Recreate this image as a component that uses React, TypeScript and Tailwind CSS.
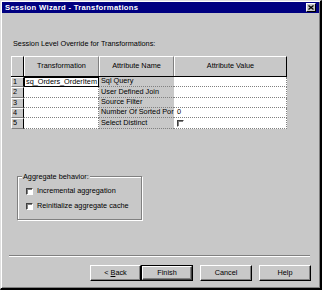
const rows = [
  { n: "1", t: "sq_Orders_OrderItem", a: "Sql Query", v: "", h: "h-[10px]" },
  { n: "2", t: "", a: "User Defined Join", v: "", h: "h-[11px]" },
  { n: "3", t: "", a: "Source Filter", v: "", h: "h-[10px]" },
  { n: "4", t: "", a: "Number Of Sorted Por", v: "0", h: "h-[10px]" },
  { n: "5", t: "", a: "Select Distinct", v: "check", h: "h-[11px]" },
];

function SunkenBox() {
  return (
    <span className="block w-[7px] h-[7px] bg-white border-t border-l border-t-[#404040] border-l-[#404040] border-b border-r border-b-white border-r-white shadow-[inset_1px_1px_#808080]" />
  );
}

function WinButton({ children, isDefault }: { children: React.ReactNode; isDefault?: boolean }) {
  if (isDefault) {
    return (
      <div className="w-[52px] h-[16px] border border-black">
        <div className="w-full h-full flex items-center justify-center border-t border-l border-t-white border-l-white border-b border-r border-b-[#404040] border-r-[#404040] shadow-[inset_-1px_-1px_#808080]">
          {children}
        </div>
      </div>
    );
  }
  return (
    <div className="w-[52px] h-[16px] flex items-center justify-center border-t border-l border-t-white border-l-white border-b border-r border-b-black border-r-black shadow-[inset_-1px_-1px_#808080]">
      {children}
    </div>
  );
}

export default function App() {
  return (
    <div className="w-[322px] h-[290px] bg-[#c8c8c8] border-t border-l border-t-[#dfdfdf] border-l-[#dfdfdf] border-r-2 border-b-2 border-r-black border-b-black p-px shadow-[inset_1px_1px_#fff,inset_-1px_-1px_#808080] font-['Liberation_Sans',Arial,sans-serif] text-[7.3px] text-black flex flex-col overflow-hidden">
      {/* title bar */}
      <div className="h-[11px] shrink-0 bg-[#000080] flex items-center justify-between pl-[3px] pr-[3px]">
        <span className="text-white font-bold text-[7.7px] leading-none tracking-[0.3px]">Session Wizard - Transformations</span>
        <div className="w-[10px] h-[9px] bg-[#c8c8c8] flex items-center justify-center border-t border-l border-t-white border-l-white border-b border-r border-b-black border-r-black">
          <svg width="6" height="5" viewBox="0 0 6 5">
            <path d="M0.5 0.5 L5.5 4.5 M5.5 0.5 L0.5 4.5" stroke="black" strokeWidth="1.3" />
          </svg>
        </div>
      </div>

      <div className="mt-[26px] ml-[11px] leading-[9px]">Session Level Override for Transformations:</div>

      {/* grid */}
      <div className="mt-[8px] ml-[9px] w-[276px] flex flex-col">
        <div className="h-[21px] flex border-b border-b-black">
          <div className="w-[13px] border-t border-l border-t-white border-l-white border-r border-r-black" />
          <div className="w-[75px] flex items-center justify-center border-t border-l border-t-white border-l-white border-r border-r-[#808080]">Transformation</div>
          <div className="w-[75px] flex items-center justify-center border-t border-l border-t-white border-l-white border-r border-r-[#808080]">Attribute Name</div>
          <div className="w-[113px] flex items-center justify-center border-t border-l border-t-white border-l-white border-r border-r-black">Attribute Value</div>
        </div>
        {rows.map((r) => (
          <div key={r.n} className={`${r.h} flex`}>
            <div className="w-[13px] flex items-center pl-px border-t border-t-white border-l border-l-white border-b border-b-[#808080] border-r border-r-black">{r.n}</div>
            {r.t ? (
              <div className="w-[75px] bg-white flex items-center pl-px border border-black overflow-hidden whitespace-nowrap">{r.t}</div>
            ) : (
              <div className="w-[75px] bg-white border-b border-r border-dotted border-b-[#808080] border-r-[#808080]" />
            )}
            <div className="w-[75px] flex items-center pl-[2px] border-b border-dotted border-b-[#808080] overflow-hidden whitespace-nowrap">{r.a}</div>
            <div className="w-[113px] bg-white flex items-center pl-[3px] border-b border-r border-dotted border-b-[#808080] border-r-[#808080]">
              {r.v === "check" ? <SunkenBox /> : r.v}
            </div>
          </div>
        ))}
      </div>

      {/* group box */}
      <div className="relative mt-[47px] ml-[15px] w-[125px] h-[44px] border border-[#808080] shadow-[inset_1px_1px_#fff,1px_1px_#fff] flex flex-col gap-[6px] pt-[10px] pl-[8px]">
        <span className="absolute -top-[5px] left-[4px] px-px bg-[#c8c8c8] leading-[9px]">Aggregate behavior:</span>
        <div className="h-[9px] flex items-center gap-[4px]">
          <SunkenBox />
          <span>Incremental aggregation</span>
        </div>
        <div className="h-[9px] flex items-center gap-[4px]">
          <SunkenBox />
          <span>Reinitialize aggregate cache</span>
        </div>
      </div>

      <div className="mt-[35px] ml-[7px] w-[301px] h-[2px] border-t border-t-[#808080] border-b border-b-white" />

      <div className="mt-[8px] flex justify-end pr-[8px]">
        <div className="w-[51px] h-[16px] flex items-center justify-center border-t border-l border-t-white border-l-white border-b border-r border-b-black border-r-black shadow-[inset_-1px_-1px_#808080]">
          <span>&lt; <span className="underline">B</span>ack</span>
        </div>
        <WinButton isDefault>Finish</WinButton>
        <div className="ml-[7px]">
          <WinButton>Cancel</WinButton>
        </div>
        <div className="ml-[7px]">
          <WinButton>Help</WinButton>
        </div>
      </div>
    </div>
  );
}
